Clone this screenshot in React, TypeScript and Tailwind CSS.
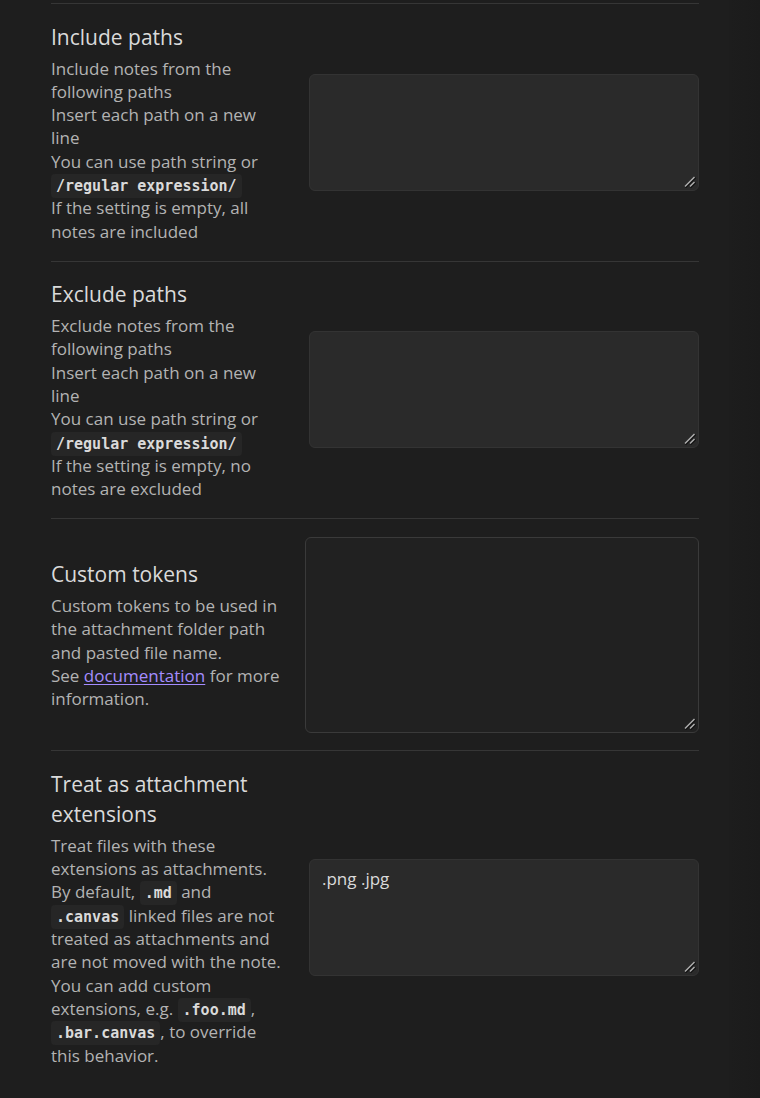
import React from "react";

const Code = ({ children }: { children: React.ReactNode }) => (
  <code className="font-['DejaVu_Sans_Mono',monospace] font-bold text-[15px] leading-none align-baseline text-[#dadada] bg-[#262626] rounded-[4px] px-[5px] py-[3px]">
    {children}
  </code>
);

const Line = ({ children }: { children: React.ReactNode }) => (
  <div className="whitespace-nowrap">{children}</div>
);

type RowProps = {
  title: React.ReactNode;
  desc: React.ReactNode;
  taWidth: string;
  taHeight: string;
  taBg: string;
  value?: string;
};

const Grip = () => (
  <svg
    className="absolute right-[3px] bottom-[3px] pointer-events-none"
    width="12"
    height="12"
    viewBox="0 0 12 12"
  >
    <line x1="1.5" y1="11.5" x2="11.5" y2="1.5" stroke="#0e0e0e" strokeWidth="1.6" />
    <line x1="1" y1="10.5" x2="10.5" y2="1" stroke="#b0b0b0" strokeWidth="1.4" />
    <line x1="6.5" y1="11.5" x2="11.5" y2="6.5" stroke="#0e0e0e" strokeWidth="1.6" />
    <line x1="6" y1="10.5" x2="10.5" y2="6" stroke="#b0b0b0" strokeWidth="1.4" />
  </svg>
);

function Row({ title, desc, taWidth, taHeight, taBg, value }: RowProps) {
  return (
    <div className="flex items-center border-t border-[#363636] py-[17.5px]">
      <div className="flex-1 min-w-0">
        <div className="text-[21px] leading-[30px] text-[#dadada]">{title}</div>
        <div className="mt-[5px] text-[17px] leading-[23.33px] text-[#b3b3b3]">{desc}</div>
      </div>
      <div className={`relative shrink-0 ${taWidth} ${taHeight}`}>
        <textarea
          readOnly
          defaultValue={value ?? ""}
          className={`${taBg} block w-full h-full resize-none rounded-[6px] border px-[12px] py-[6px] text-[17px] leading-[1.5] text-[#dadada] outline-none font-['Segoe_UI','Open_Sans',sans-serif]`}
        />
        <Grip />
      </div>
    </div>
  );
}

export default function App() {
  return (
    <div className="min-h-screen bg-[#1e1e1e] flex font-['Segoe_UI','Open_Sans',sans-serif]">
      <div className="pl-[51px] pt-[3px] w-[699px] shrink-0">
        <Row
          title="Include paths"
          taWidth="w-[390px]"
          taHeight="h-[117px]"
          taBg="bg-[#2a2a2a] border-[#333333]"
          desc={
            <>
              <Line>Include notes from the</Line>
              <Line>following paths</Line>
              <Line>Insert each path on a new</Line>
              <Line>line</Line>
              <Line>You can use path string or</Line>
              <Line>
                <Code>/regular expression/</Code>
              </Line>
              <Line>If the setting is empty, all</Line>
              <Line>notes are included</Line>
            </>
          }
        />
        <Row
          title="Exclude paths"
          taWidth="w-[390px]"
          taHeight="h-[117px]"
          taBg="bg-[#2a2a2a] border-[#333333]"
          desc={
            <>
              <Line>Exclude notes from the</Line>
              <Line>following paths</Line>
              <Line>Insert each path on a new</Line>
              <Line>line</Line>
              <Line>You can use path string or</Line>
              <Line>
                <Code>/regular expression/</Code>
              </Line>
              <Line>If the setting is empty, no</Line>
              <Line>notes are excluded</Line>
            </>
          }
        />
        <Row
          title="Custom tokens"
          taWidth="w-[394px]"
          taHeight="h-[196px]"
          taBg="bg-[#212121] border-[#3a3a3a]"
          desc={
            <>
              <Line>Custom tokens to be used in</Line>
              <Line>the attachment folder path</Line>
              <Line>and pasted file name.</Line>
              <Line>
                See{" "}
                <a href="#" className="text-[#a48cff] underline underline-offset-2">
                  documentation
                </a>{" "}
                for more
              </Line>
              <Line>information.</Line>
            </>
          }
        />
        <Row
          title={
            <>
              <Line>Treat as attachment</Line>
              <Line>extensions</Line>
            </>
          }
          taWidth="w-[390px]"
          taHeight="h-[117px]"
          taBg="bg-[#2a2a2a] border-[#333333]"
          value=".png .jpg"
          desc={
            <>
              <Line>Treat files with these</Line>
              <Line>extensions as attachments.</Line>
              <Line>
                By default, <Code>.md</Code> and
              </Line>
              <Line>
                <Code>.canvas</Code> linked files are not
              </Line>
              <Line>treated as attachments and</Line>
              <Line>are not moved with the note.</Line>
              <Line>You can add custom</Line>
              <Line>
                extensions, e.g. <Code>.foo.md</Code>,
              </Line>
              <Line>
                <Code>.bar.canvas</Code>, to override
              </Line>
              <Line>this behavior.</Line>
            </>
          }
        />
      </div>
      <div className="flex-1 flex">
        <div className="w-[30px] bg-[#1e1e1e]" />
        <div className="flex-1 bg-gradient-to-r from-[#1d1d1d] to-[#1b1b1b]" />
      </div>
    </div>
  );
}
